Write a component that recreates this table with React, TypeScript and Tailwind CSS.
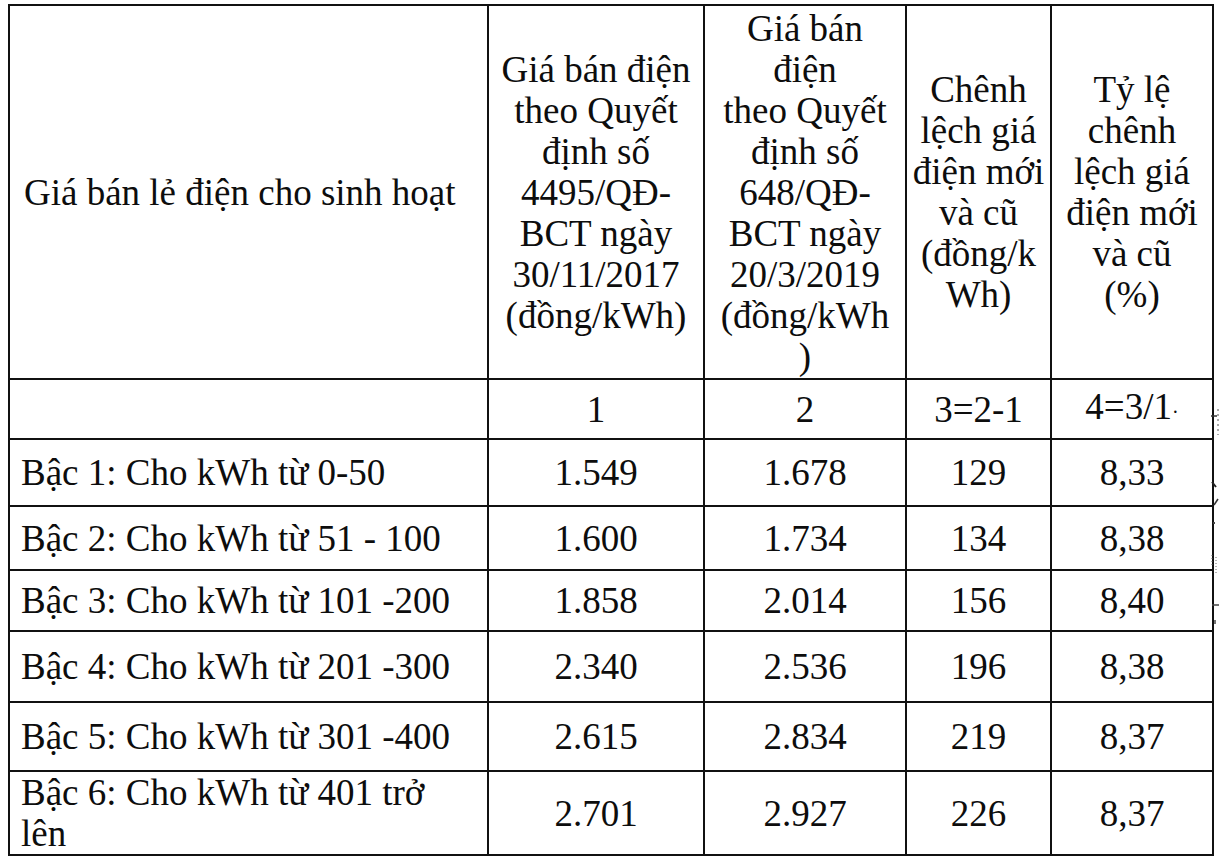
import React from "react";

const rows: { h: string; c: string[] }[] = [
  { h: "h-[67px]", c: ["Bậc 1: Cho kWh từ 0-50", "1.549", "1.678", "129", "8,33"] },
  { h: "h-[64px]", c: ["Bậc 2: Cho kWh từ 51 - 100", "1.600", "1.734", "134", "8,38"] },
  { h: "h-[61px]", c: ["Bậc 3: Cho kWh từ 101 -200", "1.858", "2.014", "156", "8,40"] },
  { h: "h-[71px]", c: ["Bậc 4: Cho kWh từ 201 -300", "2.340", "2.536", "196", "8,38"] },
  { h: "h-[69px]", c: ["Bậc 5: Cho kWh từ 301 -400", "2.615", "2.834", "219", "8,37"] },
];

function Lines({ items }: { items: string[] }) {
  return (
    <>
      {items.map((t, i) => (
        <div key={i} className="whitespace-nowrap">
          {t}
        </div>
      ))}
    </>
  );
}

export default function App() {
  return (
    <div className="relative w-[1220px] h-[861px] bg-white overflow-hidden font-['Liberation_Serif','Times_New_Roman',serif] text-[#0d0d0d] text-[37px] leading-[41px]">
      <div className="pt-[4px] pl-[8px]">
        <table className="table-fixed border-collapse w-[1204px]">
          <colgroup>
            <col className="w-[479px]" />
            <col className="w-[216px]" />
            <col className="w-[202px]" />
            <col className="w-[145px]" />
            <col className="w-[162px]" />
          </colgroup>
          <tbody>
            <tr className="h-[374px]">
              <td className="border-2 border-[#111] pl-[14px] text-left align-middle whitespace-nowrap">
                Giá bán lẻ điện cho sinh hoạt
              </td>
              <td className="border-2 border-[#111] text-center align-middle px-0">
                <Lines
                  items={[
                    "Giá bán điện",
                    "theo Quyết",
                    "định số",
                    "4495/QĐ-",
                    "BCT ngày",
                    "30/11/2017",
                    "(đồng/kWh)",
                  ]}
                />
              </td>
              <td className="border-2 border-[#111] text-center align-middle px-0">
                <Lines
                  items={[
                    "Giá bán",
                    "điện",
                    "theo Quyết",
                    "định số",
                    "648/QĐ-",
                    "BCT ngày",
                    "20/3/2019",
                    "(đồng/kWh",
                    ")",
                  ]}
                />
              </td>
              <td className="border-2 border-[#111] text-center align-middle px-0">
                <Lines
                  items={["Chênh", "lệch giá", "điện mới", "và cũ", "(đồng/k", "Wh)"]}
                />
              </td>
              <td className="border-2 border-[#111] text-center align-middle px-0">
                <Lines
                  items={["Tỷ lệ", "chênh", "lệch giá", "điện mới", "và cũ", "(%)"]}
                />
              </td>
            </tr>
            <tr className="h-[60px]">
              <td className="border-2 border-[#111]"></td>
              <td className="border-2 border-[#111] text-center">1</td>
              <td className="border-2 border-[#111] text-center">2</td>
              <td className="border-2 border-[#111] text-center">3=2-1</td>
              <td className="border-2 border-[#111] text-center">
                4=3/1<span className="text-[20px]">·</span>
              </td>
            </tr>
            {rows.map((r, i) => (
              <tr key={i} className={r.h}>
                <td className="border-2 border-[#111] pl-[11px] text-left whitespace-nowrap">
                  {r.c[0]}
                </td>
                <td className="border-2 border-[#111] text-center">{r.c[1]}</td>
                <td className="border-2 border-[#111] text-center">{r.c[2]}</td>
                <td className="border-2 border-[#111] text-center">{r.c[3]}</td>
                <td className="border-2 border-[#111] text-center">{r.c[4]}</td>
              </tr>
            ))}
            <tr className="h-[83px]">
              <td className="border-2 border-[#111] pl-[11px] text-left leading-[41px]">
                <div className="whitespace-nowrap">Bậc 6: Cho kWh từ 401 trở</div>
                <div>lên</div>
              </td>
              <td className="border-2 border-[#111] text-center">2.701</td>
              <td className="border-2 border-[#111] text-center">2.927</td>
              <td className="border-2 border-[#111] text-center">226</td>
              <td className="border-2 border-[#111] text-center">8,37</td>
            </tr>
          </tbody>
        </table>
      </div>
      <svg
        className="absolute right-0 top-[395px]"
        width="10"
        height="260"
        viewBox="0 0 10 260"
      >
        <path d="M1 21 H7" stroke="#333" strokeWidth="1.5" />
        <path d="M8 14 V40" stroke="#555" strokeWidth="1" strokeDasharray="2 3" />
        <path d="M2 87 L6 92" stroke="#222" strokeWidth="2" />
        <path d="M4 110 L8 104" stroke="#333" strokeWidth="1.5" />
        <path d="M3 128 h2" stroke="#444" strokeWidth="2" />
        <path d="M2 160 V172" stroke="#666" strokeWidth="1" strokeDasharray="1 2" />
        <path d="M6 162 V178" stroke="#666" strokeWidth="1" strokeDasharray="1 2" />
        <path d="M2 210 H9" stroke="#444" strokeWidth="1.5" />
        <path d="M5 225 v4" stroke="#444" strokeWidth="1.5" />
      </svg>
    </div>
  );
}
